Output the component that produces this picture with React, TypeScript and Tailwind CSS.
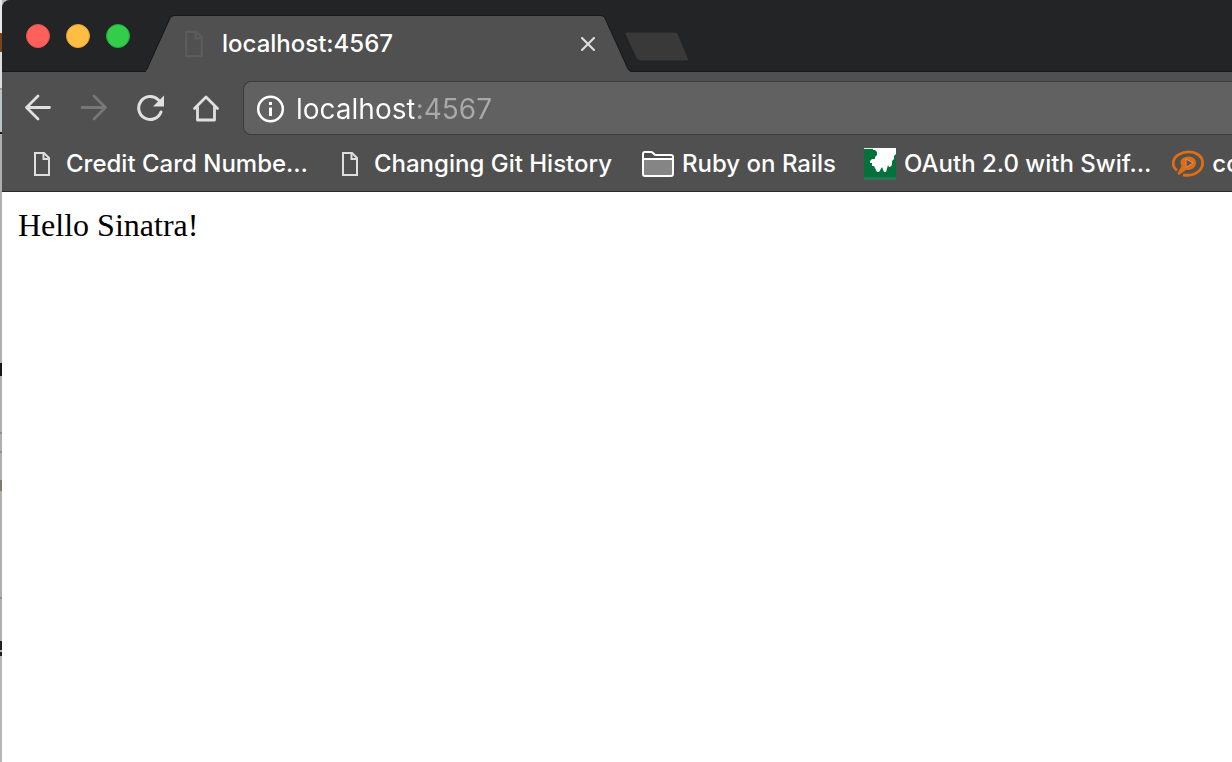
import React from "react";

const toolbarButton = "flex h-10 w-14 shrink-0 items-center justify-center";

function PageIcon({ className }: { className: string }) {
  return (
    <svg viewBox="0 0 18 26" className={className} fill="none" stroke="currentColor" strokeWidth="2" aria-hidden="true">
      <path d="M2 2h9l5 5v17H2z" />
      <path d="M10.5 2v6H16" />
    </svg>
  );
}

function FolderIcon() {
  return (
    <svg viewBox="0 0 32 26" className="h-[26px] w-8 shrink-0" aria-hidden="true">
      <path d="M2 8h28v16H2z" fill="#858585" />
      <path d="M1 22V3q0-2 2-2h6q1 0 2 1l1.500 1.500q.5.500 1.500.500H29q2 0 2 2v17q0 2-2 2H3q-2 0-2-2zM1 8h30" fill="none" stroke="#fff" strokeWidth="2" />
    </svg>
  );
}

function GreenIcon() {
  return (
    <svg viewBox="0 0 32 32" className="h-8 w-8 shrink-0" aria-hidden="true">
      <path d="M0 0h32v32H0z" fill="#04703c" />
      <path d="M0 0h32v1H0z" fill="#e3f0e9" />
      <path d="M9 0H32V6L30 8V11L28 13V17L26 19H25L24 17L22 24H20L18 19L15 24H13L10 18H8V15H6V13L8 11H11V9L13 7V4L11 2H9z" fill="#fff" />
      <path d="M0 29h32v3H0z" fill="#267650" />
    </svg>
  );
}

function PlayIcon() {
  return (
    <svg viewBox="0 0 32 28" className="h-7 w-8 shrink-0" aria-hidden="true">
      <path d="M5 20.500C-1 16 .5 8 7 4.500C13 1 21 1 26 4.500C32 8.500 32 16.500 27 21C23 24.500 17 26 11 24.800" fill="none" stroke="#df6d12" strokeWidth="2.800" />
      <path d="M9.500 16C6.500 10 11 6.500 16.500 6.500C21 6.500 24.500 9.500 24 13.500C23.500 17.500 19.500 20.500 14 20L7 25L5.500 23.500z" fill="#df6d12" />
      <path d="M14 9v8.500l7-4.500z" fill="#5d5654" stroke="#e98a60" />
    </svg>
  );
}

const bookmarks = [
  { label: "Credit Card Numbe…", icon: "page", box: "ml-[31px]" },
  { label: "Changing Git History", icon: "page", box: "ml-[33px]" },
  { label: "Ruby on Rails", icon: "folder", box: "ml-[30px]" },
  { label: "OAuth 2.0 with Swif…", icon: "green", box: "ml-7" },
  { label: "co", icon: "play", box: "ml-[21px]" },
];

function BookmarkIcon({ kind }: { kind: string }) {
  if (kind === "folder") return <FolderIcon />;
  if (kind === "green") return <GreenIcon />;
  if (kind === "play") return <PlayIcon />;
  return <PageIcon className="mr-[7px] h-[26px] w-[18px] shrink-0 text-[#dedede]" />;
}

export default function App() {
  return (
    <div className="flex min-h-screen overflow-hidden bg-[#b5b5b5] font-['Inter',sans-serif]">
      <div className="flex w-[2px] shrink-0 flex-col" aria-hidden="true">
        <div className="h-[33px] bg-[#e8e8e8]" />
        <div className="h-[19px] bg-[#784321]" />
        <div className="h-[36px] bg-[#dedede]" />
        <div className="h-[2px] bg-[#a0a0a0]" />
        <div className="h-[42px] bg-[#bcc4c8]" />
        <div className="h-[2px] bg-[#16161e]" />
        <div className="h-[229px] bg-[#b0b0b0]" />
        <div className="h-[13px] bg-[#15151f]" />
        <div className="h-[56px] bg-[#b0b0b0]" />
        <div className="h-[2px] bg-[#909090]" />
        <div className="h-[17px] bg-[#b0b0b0]" />
        <div className="h-[2px] bg-[#909090]" />
        <div className="h-[27px] bg-[#b0b0b0]" />
        <div className="h-[11px] bg-[#86786c]" />
        <div className="h-[106px] bg-[#b0b0b0]" />
        <div className="h-[2px] bg-[#909090]" />
        <div className="h-[42px] bg-[#b0b0b0]" />
        <div className="h-[9px] bg-[#202020]" />
        <div className="h-[2px] bg-[#b0b0b0]" />
        <div className="h-[4px] bg-[#202020]" />
      </div>
      <div className="flex min-w-0 flex-1 flex-col overflow-hidden rounded-tl-lg bg-white">
        <header className="flex flex-col bg-[#505050]">
          <div className="flex h-[72px] items-start border-b border-[#161718] bg-[#222425]">
            <div className="flex shrink-0 gap-4 pl-6 pt-6">
              <button aria-label="Close window" className="h-6 w-6 rounded-full border border-[#e2514d] bg-[#ff605c]" />
              <button aria-label="Minimize window" className="h-6 w-6 rounded-full border border-[#e3a235] bg-[#ffbd44]" />
              <button aria-label="Zoom window" className="h-6 w-6 rounded-full border border-[#20ac38] bg-[#33cc4b]" />
            </div>
            <div className="relative ml-4 mt-[15px] flex h-[57px] w-[486px] shrink-0 items-center px-8">
              <svg viewBox="0 0 486 57" className="absolute inset-0 h-[57px] w-[486px]" aria-hidden="true">
                <path d="M-3 57Q0 56.500 1 54L24 4Q25 1 28 1H455Q458 1 459 4L482 54Q483 56.500 486 57z" fill="#505050" />
                <path d="M-3 56.500Q0 56 1 54L24 3Q25 .5 28 .5H455Q458 .5 459 3L482 54Q483 56 486 56.500" fill="none" stroke="#161718" />
              </svg>
              <PageIcon className="relative ml-[6px] h-[30px] w-5 shrink-0 text-[#5c5c5c]" />
              <span className="relative ml-[18px] flex-1 whitespace-nowrap text-2xl font-medium text-white">localhost:4567</span>
              <button aria-label="Close tab" className="relative flex h-6 w-6 items-center justify-center text-[#dcdcdc]">
                <svg viewBox="0 0 14 14" className="h-[14px] w-[14px]" fill="none" stroke="currentColor" strokeWidth="2.200" strokeLinecap="round">
                  <path d="M1 1l12 12M13 1L1 13" />
                </svg>
              </button>
            </div>
            <button aria-label="New tab" className="-ml-2 mt-[31px]">
              <svg viewBox="0 0 66 32" className="h-8 w-[66px]">
                <path d="M3 1H50Q53 1 54 3L65 29Q65 30 63 30H17Q14 30 12 27L1 3Q1 1 3 1z" fill="#393939" stroke="#222324" />
              </svg>
            </button>
          </div>

          <nav aria-label="Navigation" className="flex h-[66px] items-center pb-[3px] pl-2 pt-[9px]">
            <div className="flex shrink-0">
              <button aria-label="Back" className={toolbarButton}>
                <svg viewBox="0 0 28 28" className="h-7 w-7" fill="none" stroke="#e0e0e0" strokeWidth="2.800" strokeLinecap="round" strokeLinejoin="round">
                  <path d="M25.500 13.500H2.500M14 2L2.500 13.500L14 25" />
                </svg>
              </button>
              <button aria-label="Forward" className={toolbarButton}>
                <svg viewBox="0 0 28 28" className="h-7 w-7" fill="none" stroke="#777" strokeWidth="2.800" strokeLinecap="round" strokeLinejoin="round">
                  <path d="M2 13.500h23.500M14 2L25.500 13.500L14 25" />
                </svg>
              </button>
              <button aria-label="Reload" className={toolbarButton}>
                <svg viewBox="0 0 28 28" className="h-7 w-7">
                  <path d="M22.500 6A11.500 11.500 0 1 0 25 18" fill="none" stroke="#e0e0e0" strokeWidth="3" strokeLinecap="round" />
                  <path d="M28 1.500V12.500H17z" fill="#e0e0e0" />
                </svg>
              </button>
              <button aria-label="Home" className={toolbarButton}>
                <svg viewBox="0 0 28 28" className="h-7 w-7" fill="none" stroke="#e0e0e0" strokeWidth="2.800" strokeLinecap="round" strokeLinejoin="round">
                  <path d="M2.500 14.500L14 3L25.500 14.500M5.500 13V26H22.500V13" />
                </svg>
              </button>
            </div>
            <div className="ml-[9px] flex h-[54px] min-w-0 flex-1 items-center rounded-l-lg border border-r-0 border-[#3c3c3c] bg-[#616161] pl-3 pt-px">
              <svg viewBox="0 0 28 28" className="h-7 w-7 shrink-0" aria-hidden="true">
                <circle cx="14.500" cy="14" r="12.300" fill="none" stroke="#fff" strokeWidth="2.500" />
                <path d="M13 7h3v3h-3zM13 12.500h3V21h-3z" fill="#fff" />
              </svg>
              <input
                aria-label="Address"
                defaultValue="localhost:4567"
                spellCheck={false}
                className="ml-3 min-w-0 flex-1 bg-[linear-gradient(90deg,#fff_118px,#a9a9a9_118px)] bg-clip-text text-[28px] leading-9 text-transparent outline-none"
              />
            </div>
          </nav>

          <nav aria-label="Bookmarks" className="flex h-[54px] items-center overflow-hidden border-b border-[#2b2b2b] pb-[2px]">
            {bookmarks.map((b) => (
              <a key={b.label} href="#" className={`${b.box} flex shrink-0 items-center gap-2 whitespace-nowrap text-2xl font-medium text-white`}>
                <BookmarkIcon kind={b.icon} />
                <span>{b.label}</span>
              </a>
            ))}
          </nav>
        </header>
        <main className="flex-1 px-4 pt-[15px] font-['Liberation_Serif',serif] text-[32px] leading-9 text-black">Hello Sinatra!</main>
      </div>
    </div>
  );
}
